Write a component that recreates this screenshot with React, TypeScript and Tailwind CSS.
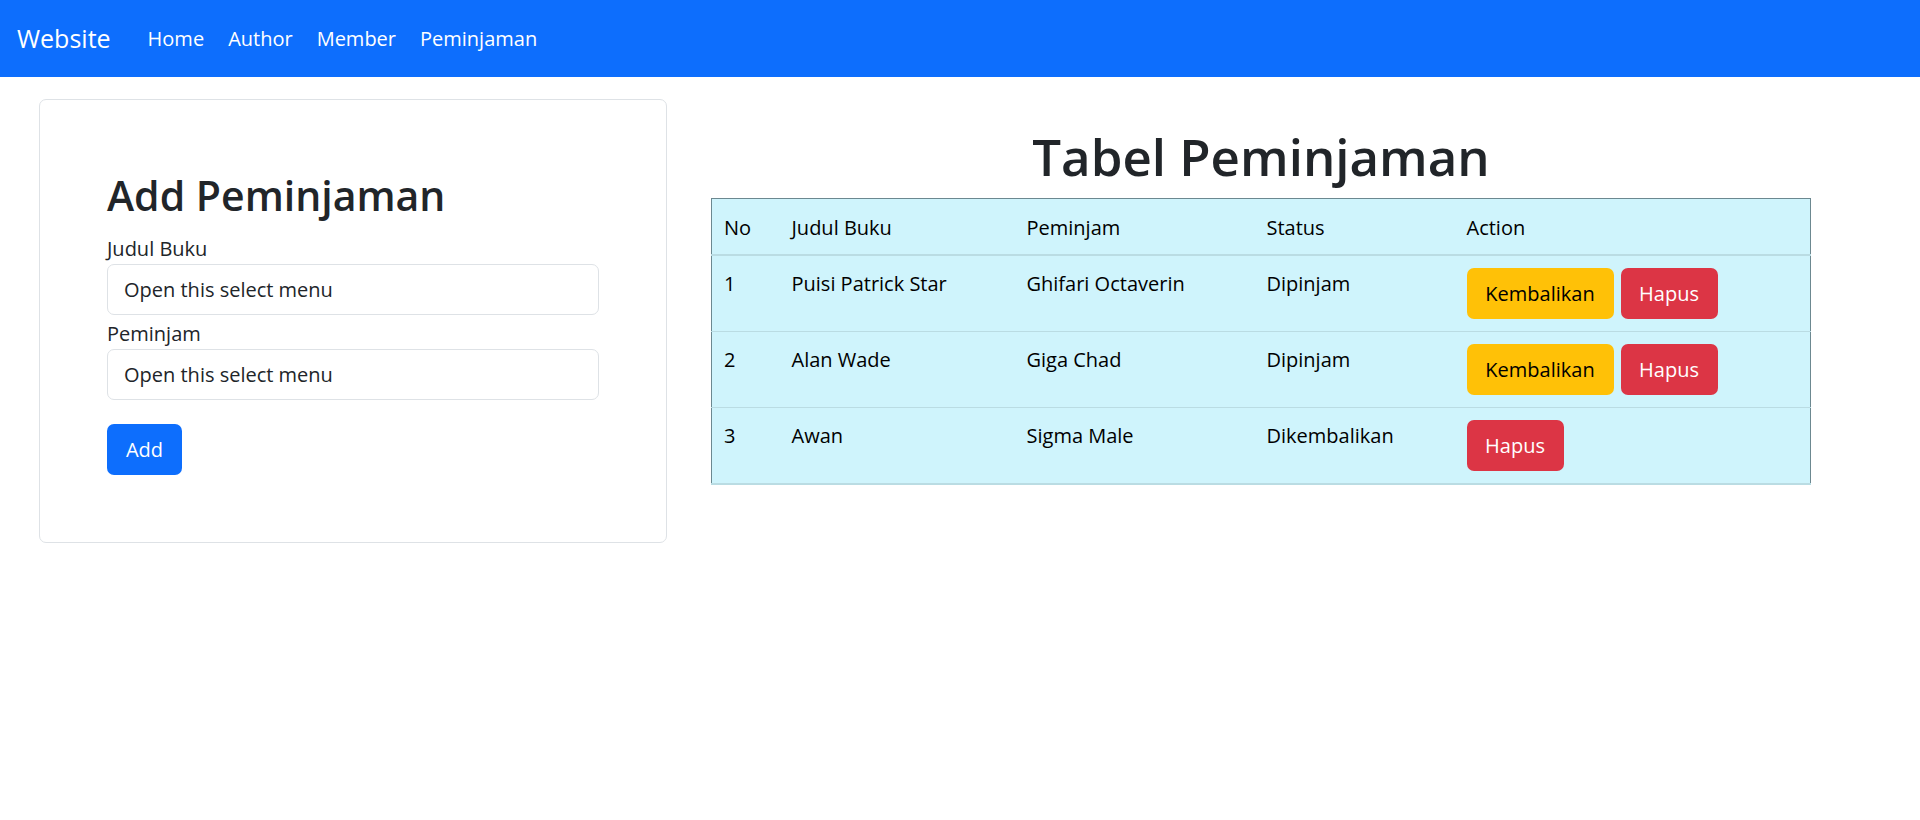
import React from 'react';

const rows = [
  { no: 1, judul: 'Puisi Patrick Star', peminjam: 'Ghifari Octaverin', status: 'Dipinjam', returned: false },
  { no: 2, judul: 'Alan Wade', peminjam: 'Giga Chad', status: 'Dipinjam', returned: false },
  { no: 3, judul: 'Awan', peminjam: 'Sigma Male', status: 'Dikembalikan', returned: true },
];

export default function App() {
  return (
    <div className="min-h-screen bg-white font-['Open_Sans',sans-serif] text-[#212529]">
      <nav className="h-[77px] bg-[#0d6efd] flex items-center pl-[17px]">
        <span className="text-[25px] text-white mr-[25px]">Website</span>
        <div className="flex">
          <NavLink>Home</NavLink>
          <NavLink>Author</NavLink>
          <NavLink>Member</NavLink>
          <NavLink>Peminjaman</NavLink>
        </div>
      </nav>

      <div className="flex items-start pt-[22px] pl-[39px]">
        <div className="w-[628px] border border-[#dee2e6] rounded-[7px] p-[67px]">
          <h2 className="mt-[4px] text-[41px] font-semibold leading-[1.2] mb-[14px]">Add Peminjaman</h2>
          <label className="block text-[20px] leading-[30px]">Judul Buku</label>
          <SelectBox />
          <label className="block text-[20px] leading-[30px] mt-[4px]">Peminjam</label>
          <SelectBox />
          <button className="mt-[24px] h-[51px] w-[75px] rounded-[7px] bg-[#0d6efd] text-white text-[20px] leading-[30px]">
            Add
          </button>
        </div>

        <div className="ml-[44px] w-[1100px] pt-[27px]">
          <h1 className="text-[51px] font-semibold leading-[1.2] mb-[11px] text-center">Tabel Peminjaman</h1>
          <table className="w-[1100px] table-fixed border-collapse border-x border-t border-[#6c8890] bg-[#cff4fc] text-black text-[20px] leading-[30px]">
            <colgroup>
              <col className="w-[70px]" />
              <col className="w-[235px]" />
              <col className="w-[240px]" />
              <col className="w-[200px]" />
              <col />
            </colgroup>
            <thead>
              <tr className="border-b-2 border-[#badce3]">
                <th className="text-left font-normal pl-[12px] pt-[14px] pb-[11px]">No</th>
                <th className="text-left font-normal px-[10px] pt-[14px] pb-[11px]">Judul Buku</th>
                <th className="text-left font-normal px-[10px] pt-[14px] pb-[11px]">Peminjam</th>
                <th className="text-left font-normal px-[10px] pt-[14px] pb-[11px]">Status</th>
                <th className="text-left font-normal px-[10px] pt-[14px] pb-[11px]">Action</th>
              </tr>
            </thead>
            <tbody>
              {rows.map((r, i) => (
                <tr key={r.no} className={i === rows.length - 1 ? 'border-b-2 border-[#badce3]' : 'border-b border-[#badce3]'}>
                  <td className="align-top pl-[12px] pt-[13px]">{r.no}</td>
                  <td className="align-top px-[10px] pt-[13px]">{r.judul}</td>
                  <td className="align-top px-[10px] pt-[13px]">{r.peminjam}</td>
                  <td className="align-top px-[10px] pt-[13px]">{r.status}</td>
                  <td className="align-top px-[10px] py-[12px]">
                    <div className="flex gap-[7px]">
                      {!r.returned && (
                        <button className="h-[51px] w-[147px] rounded-[7px] bg-[#ffc107] text-black text-[20px]">
                          Kembalikan
                        </button>
                      )}
                      <button className="h-[51px] w-[97px] rounded-[7px] bg-[#dc3545] text-white text-[20px]">
                        Hapus
                      </button>
                    </div>
                  </td>
                </tr>
              ))}
            </tbody>
          </table>
        </div>
      </div>
    </div>
  );
}

function NavLink({ children }: { children: React.ReactNode }) {
  return <a className="px-[12px] text-[20px] text-white">{children}</a>;
}

function SelectBox() {
  return (
    <div className="h-[51px] w-full border border-[#dee2e6] rounded-[7px] pl-[16px] flex items-center text-[20px]">
      Open this select menu
    </div>
  );
}
